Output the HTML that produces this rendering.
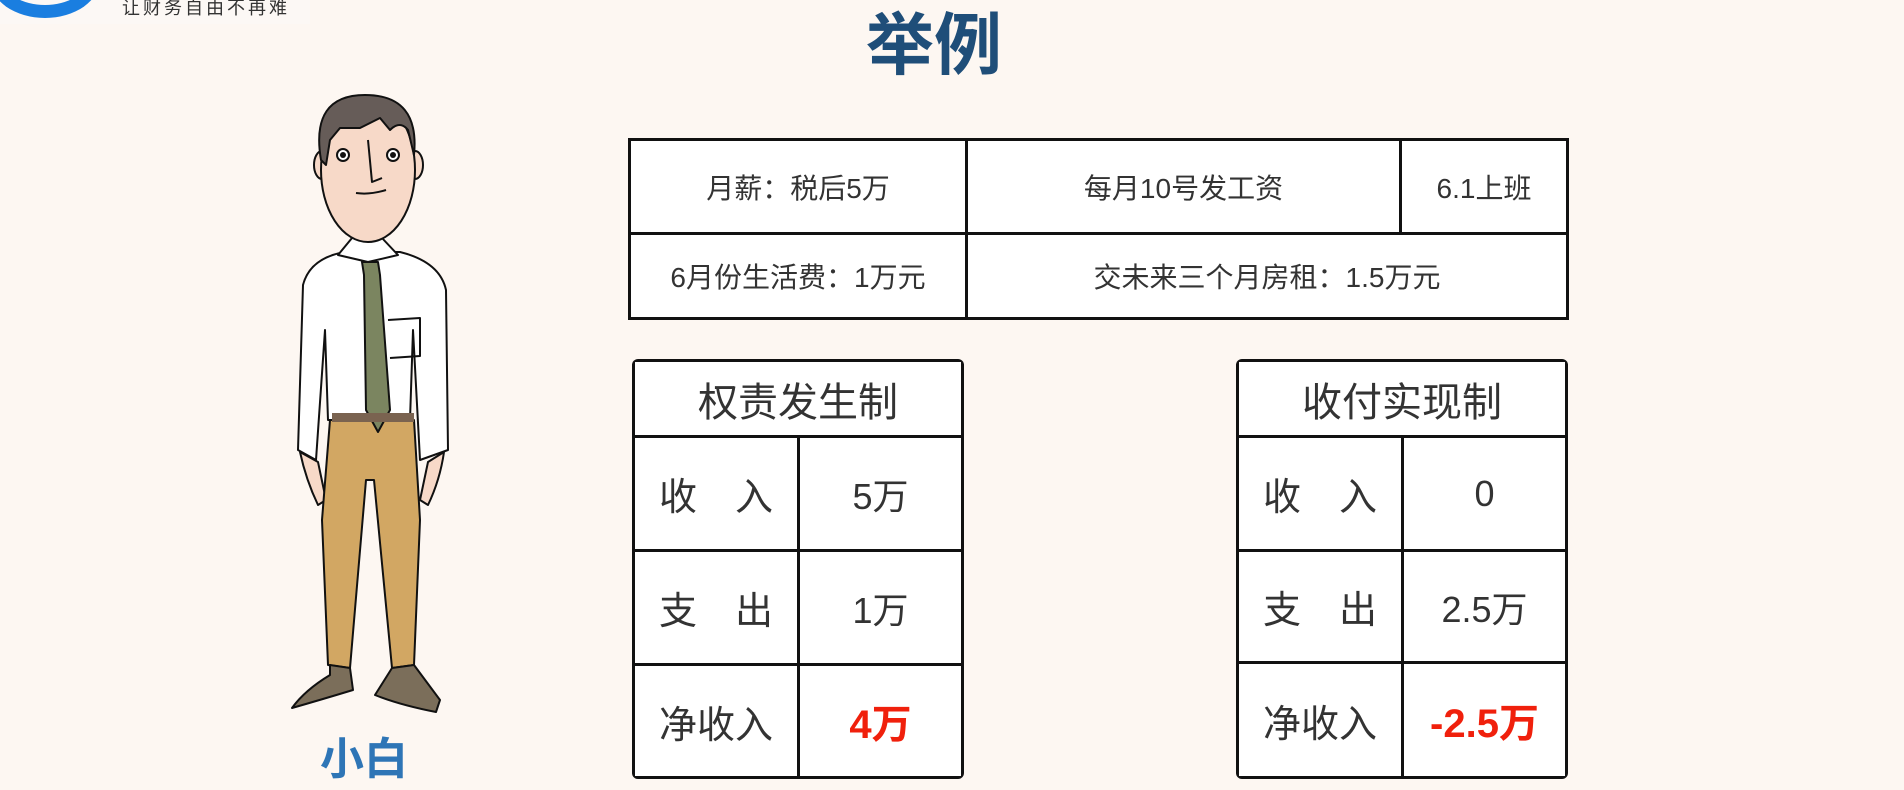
<!DOCTYPE html>
<html><head><meta charset="utf-8"><style>
body{margin:0;width:1904px;height:790px;background:#fdf7f2;position:relative;overflow:hidden;font-family:"Liberation Sans","Noto Sans CJK SC",sans-serif;}
.a{position:absolute;box-sizing:border-box;}
.c{position:absolute;box-sizing:border-box;display:flex;align-items:center;justify-content:center;color:#333;background:#fff;}
</style></head><body>
<div class="a" style="left:0;top:0;width:310px;height:24px;background:#fcf8f5"></div>
<div class="a" style="left:-10px;top:-60px;width:110px;height:78px;border-radius:50%;border:13px solid #1a7ee0;border-top-color:transparent"></div>
<div class="a" style="left:122px;top:-6px;font-size:18px;color:#333;letter-spacing:3px">让财务自由不再难</div>
<div class="a" style="left:866px;top:-10px;font-size:68px;font-weight:bold;color:#1f4e79">举例</div>

<!-- figure -->
<svg class="a" style="left:0;top:0" width="500" height="740" viewBox="0 0 500 740">
<g stroke="#111" stroke-width="2" stroke-linejoin="round">
<path d="M345 252 Q310 258 303 285 L298 450 L316 460 L325 330 L328 420 L410 420 L413 330 L420 460 L448 450 L446 290 Q440 262 400 252 Z" fill="#fff"/>
<path d="M300 452 Q306 480 318 505 L326 500 L318 462 Z" fill="#f7d9c8"/>
<path d="M444 452 Q440 480 428 505 L420 500 L428 462 Z" fill="#f7d9c8"/>
<path d="M330 420 L414 420 L420 520 L414 665 L392 668 L374 480 L366 480 L350 668 L328 665 L322 520 Z" fill="#d2a763"/>
<path d="M330 665 L350 668 L353 690 Q320 700 292 708 Q305 690 330 675 Z" fill="#7b6e5a"/>
<path d="M392 668 L414 665 L440 700 L436 712 Q400 705 375 695 Z" fill="#7b6e5a"/>
<path d="M338 255 L352 238 L382 238 L398 255 L368 262 Z" fill="#fff"/>
<path d="M362 262 L378 262 L380 275 L390 410 L378 432 L366 410 L364 275 Z" fill="#7b8560"/>
<path d="M388 320 L420 318 L420 356 L390 358" fill="none"/>
<ellipse cx="322" cy="165" rx="8" ry="14" fill="#f7d9c8"/>
<ellipse cx="415" cy="165" rx="8" ry="14" fill="#f7d9c8"/>
<ellipse cx="368" cy="170" rx="47" ry="72" fill="#f7d9c8"/>
<path d="M321 160 Q310 95 365 95 Q420 95 414 155 L408 130 Q400 120 390 130 L380 118 L360 128 L340 128 L330 140 L326 165 Z" fill="#665c58"/>
<circle cx="343" cy="155" r="6" fill="#fff"/><circle cx="393" cy="155" r="6" fill="#fff"/>
<path d="M368 140 L372 182 L382 178 M356 193 Q370 195 386 190" fill="none"/>
</g>
<circle cx="343" cy="155" r="3" fill="#111"/><circle cx="393" cy="155" r="3" fill="#111"/>
<rect x="332" y="413" width="82" height="9" fill="#7a6350"/>
</svg>
<div class="a" style="left:320px;top:723px;font-size:44px;font-weight:bold;color:#2e75b6">小白</div>

<div class="a" style="left:628px;top:138px;width:941px;height:182px;background:#111"></div>
<div class="c" style="left:631px;top:141px;width:334px;height:91px;font-size:28px">月薪：税后5万</div>
<div class="c" style="left:968px;top:141px;width:431px;height:91px;font-size:28px">每月10号发工资</div>
<div class="c" style="left:1402px;top:141px;width:164px;height:91px;font-size:28px">6.1上班</div>
<div class="c" style="left:631px;top:235px;width:334px;height:82px;font-size:28px">6月份生活费：1万元</div>
<div class="c" style="left:968px;top:235px;width:598px;height:82px;font-size:28px">交未来三个月房租：1.5万元</div>

<div class="a" style="left:632px;top:359px;width:332px;height:420px;background:#111;border-radius:6px"></div>
<div class="c" style="left:635px;top:362px;width:326px;height:73px;font-size:40px">权责发生制</div>
<div class="c" style="left:635px;top:438px;width:162px;height:111px;font-size:38px">收　入</div>
<div class="c" style="left:800px;top:438px;width:161px;height:111px;font-size:36px">5万</div>
<div class="c" style="left:635px;top:552px;width:162px;height:111px;font-size:38px">支　出</div>
<div class="c" style="left:800px;top:552px;width:161px;height:111px;font-size:36px">1万</div>
<div class="c" style="left:635px;top:666px;width:162px;height:110px;font-size:38px">净收入</div>
<div class="c" style="left:800px;top:666px;width:161px;height:110px;font-size:40px;font-weight:bold;color:#f0200c">4万</div>

<div class="a" style="left:1236px;top:359px;width:332px;height:420px;background:#111;border-radius:6px"></div>
<div class="c" style="left:1239px;top:362px;width:326px;height:73px;font-size:40px">收付实现制</div>
<div class="c" style="left:1239px;top:438px;width:162px;height:111px;font-size:38px">收　入</div>
<div class="c" style="left:1404px;top:438px;width:161px;height:111px;font-size:36px">0</div>
<div class="c" style="left:1239px;top:552px;width:162px;height:109px;font-size:38px">支　出</div>
<div class="c" style="left:1404px;top:552px;width:161px;height:109px;font-size:36px">2.5万</div>
<div class="c" style="left:1239px;top:664px;width:162px;height:112px;font-size:38px">净收入</div>
<div class="c" style="left:1404px;top:664px;width:161px;height:112px;font-size:40px;font-weight:bold;color:#f0200c">-2.5万</div>
</body></html>
